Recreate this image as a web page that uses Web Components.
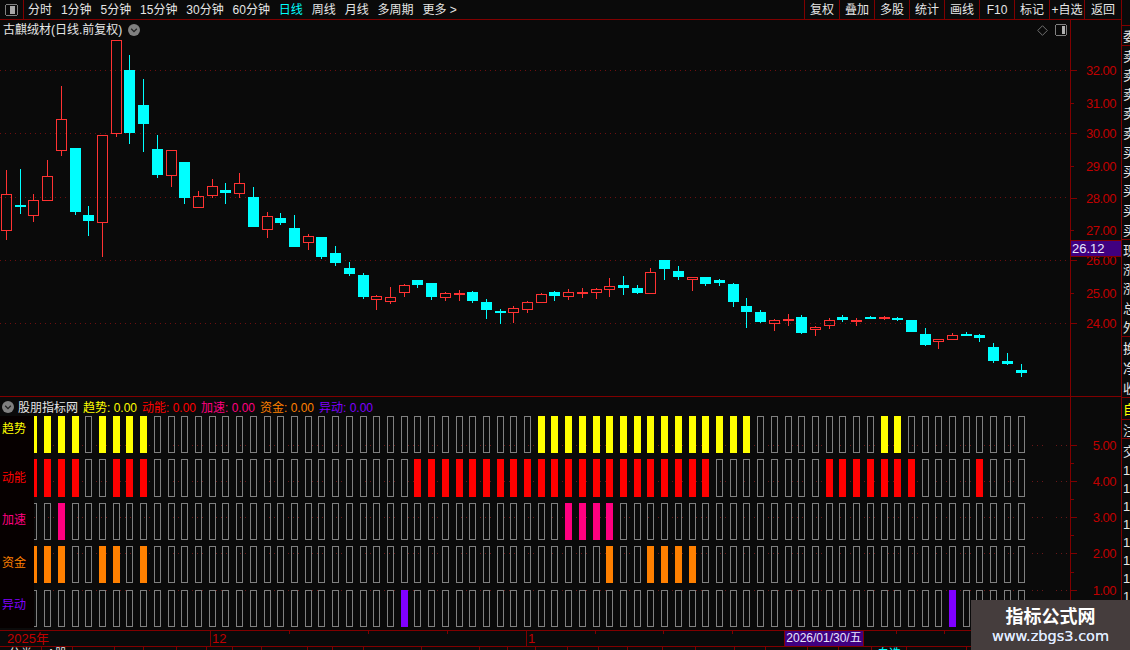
<!DOCTYPE html>
<html>
<head>
<meta charset="utf-8">
<style>
  html,body { margin:0; padding:0; background:#0a0a0a; overflow:hidden; }
  body { width:1130px; height:650px; font:12px "Liberation Sans","Noto Sans CJK SC",sans-serif; color:#e6e6e6; }
</style>
</head>
<body>
<kline-app>
  <k-toolbar slot="toolbar">
    <k-tab>分时</k-tab><k-tab>1分钟</k-tab><k-tab>5分钟</k-tab><k-tab>15分钟</k-tab><k-tab>30分钟</k-tab><k-tab>60分钟</k-tab>
    <k-tab active>日线</k-tab><k-tab>周线</k-tab><k-tab>月线</k-tab><k-tab>多周期</k-tab><k-tab>更多 &gt;</k-tab>
    <k-btn slot="right">复权</k-btn><k-btn slot="right">叠加</k-btn><k-btn slot="right">多股</k-btn><k-btn slot="right">统计</k-btn>
    <k-btn slot="right">画线</k-btn><k-btn slot="right">F10</k-btn><k-btn slot="right">标记</k-btn><k-btn slot="right">+自选</k-btn><k-btn slot="right" wide>返回</k-btn>
  </k-toolbar>
  <candle-chart slot="main">古麒绒材(日线.前复权)</candle-chart>
  <indicator-panel slot="ind">
    <ind-item color="#ffff00" label="趋势" value="0.00"></ind-item>
    <ind-item color="#ff0000" label="动能" value="0.00"></ind-item>
    <ind-item color="#ff0080" label="加速" value="0.00"></ind-item>
    <ind-item color="#ff8000" label="资金" value="0.00"></ind-item>
    <ind-item color="#8000ff" label="异动" value="0.00"></ind-item>
  </indicator-panel>
  <time-axis slot="time"></time-axis>
  <bottom-tabs slot="tabs"></bottom-tabs>
  <side-strip slot="side"></side-strip>
  <zb-mark slot="mark"></zb-mark>
</kline-app>

<script>
// shared helpers
const BG = "#0a0a0a", LINE = "#800000", AXIS_TXT = "#c00000";
const barLeft = i => Math.round(3.07 + 13.71 * i);
const dots = (w, y, color, dash) => `<line x1="0" x2="${w}" y1="${y + .5}" y2="${y + .5}" stroke="${color}" stroke-dasharray="${dash}"/>`;

// up = red hollow, dn = cyan filled : [type, high, low, top, bottom] in page pixels
const CANDLES = [
  ["u",170,240,194,231],["d",169,214,205,207],["u",194,222,200,216],["u",160,201,176,201],["u",86,156,119,151],
  ["d",148,215,148,212],["d",206,236,215,221],["u",135,257,135,223],["u",40,137,40,134],["d",55,144,70,133],
  ["d",79,152,105,124],["d",135,178,149,175],["u",150,187,150,176],["d",162,204,162,198],["u",191,208,196,208],
  ["u",179,198,186,196],["d",183,204,190,193],["u",173,198,183,194],["d",187,227,197,227],["u",212,238,216,230],
  ["d",213,225,218,223],["d",215,247,228,247],["u",234,250,236,243],["d",237,259,237,257],["d",246,266,253,263],
  ["d",262,276,268,274],["d",273,299,275,297],["u",295,310,296,300],["u",287,304,297,302],["u",284,297,285,293],
  ["d",280,288,280,285],["d",283,300,283,297],["u",292,301,293,298],["u",290,301,293,295],["d",291,303,292,301],
  ["d",299,319,302,310],["d",309,324,311,313],["u",306,323,308,313],["u",301,313,302,310],["u",293,303,294,303],
  ["d",291,301,292,296],["u",289,300,292,297],["u",288,298,292,293],["u",288,299,289,293],["u",278,297,286,290],
  ["d",276,295,285,288],["d",285,294,288,293],["u",268,294,272,294],["d",260,280,260,269],["d",266,280,271,277],
  ["u",277,291,277,280],["d",277,286,277,284],["d",279,286,280,283],["d",283,307,284,302],["d",298,328,306,312],
  ["d",310,323,312,322],["u",319,331,320,324],["u",314,326,319,320],["d",315,334,317,333],["u",326,336,327,330],
  ["u",318,329,320,326],["d",315,322,317,320],["u",318,326,320,322],["d",316,319,317,318],["u",316,320,317,319],
  ["d",317,321,318,320],["d",320,332,320,332],["d",328,346,334,345],["u",339,349,339,342],["u",333,340,335,340],
  ["d",332,336,334,336],["d",334,342,335,338],["d",343,363,347,361],["d",353,365,361,364],["d",364,377,370,373]
];

// value axis on the right of a pane, labels sit at their scale position
class PriceAxis extends HTMLElement {
  constructor(){
    super();
    this.attachShadow({mode:"open"});
  }
  connectedCallback(){
    const marks = JSON.parse(this.getAttribute("marks"));
    const minor = JSON.parse(this.getAttribute("minor") || "[]");
    let html = `<style>
      :host { display:block; position:relative; width:50px; height:100%; flex:none; font:13px "Liberation Sans",sans-serif; color:${AXIS_TXT}; }
      b { position:absolute; left:0; height:1px; background:${LINE}; width:6px; }
      b.m { width:3px; }
      span { position:absolute; right:5px; line-height:14px; letter-spacing:-.5px; }
      </style>`;
    for (const [y, t, short] of marks) {
      html += `<b class="${short ? "m" : ""}" style="top:${y}px"></b><span style="top:${y - 6}px">${t}</span>`;
    }
    for (const y of minor) html += `<b class="m" style="top:${y}px"></b>`;
    html += `<slot></slot>`;
    this.shadowRoot.innerHTML = html;
  }
}
customElements.define("price-axis", PriceAxis);

class PriceTag extends HTMLElement {
  constructor(){
    super();
    this.attachShadow({mode:"open"}).innerHTML = `<style>
      :host { position:absolute; left:0; right:0; height:15px; background:#400080; border:solid ${LINE}; border-width:1px 0;
        color:#e8e8ff; font:13px/15px "Liberation Sans",sans-serif; padding-left:1px; }
      </style><slot></slot>`;
  }
}
customElements.define("price-tag", PriceTag);

const tplToolbar = document.createElement("template");
tplToolbar.innerHTML = `
<style>
  :host { display:flex; height:19px; border-bottom:1px solid ${LINE}; }
  .ico { width:23px; border-right:1px solid ${LINE}; display:flex; align-items:center; justify-content:center; flex:none; }
  .tabs { flex:1; display:flex; align-items:center; gap:8.9px; padding-left:4px; }
  .btns { display:flex; }
</style>
<div class="ico"><svg width="13" height="12" shape-rendering="crispEdges"><rect x=".5" y=".5" width="12" height="11" rx="2" fill="none" stroke="#808080"/><rect x="5" y="2" width="5" height="8" fill="#a8a8a8"/></svg></div>
<div class="tabs"><slot></slot></div>
<div class="btns"><slot name="right"></slot></div>`;
class KToolbar extends HTMLElement {
  constructor(){
    super();
    this.attachShadow({mode:"open"}).appendChild(tplToolbar.content.cloneNode(true));
  }
}
customElements.define("k-toolbar", KToolbar);

class KTab extends HTMLElement {
  constructor(){
    super();
    this.attachShadow({mode:"open"}).innerHTML = `<style>
      :host { display:block; white-space:nowrap; color:#e6e6e6; height:19px; line-height:20px; }
      :host([active]) { color:#00ffff; }
      </style><slot></slot>`;
  }
}
customElements.define("k-tab", KTab);

class KBtn extends HTMLElement {
  constructor(){
    super();
    this.attachShadow({mode:"open"}).innerHTML = `<style>
      :host { display:block; width:34px; height:19px; line-height:20px; text-align:center; border-left:1px solid ${LINE}; white-space:nowrap; color:#e6e6e6; }
      :host([wide]) { width:36px; }
      </style><slot></slot>`;
  }
}
customElements.define("k-btn", KBtn);

const tplChart = document.createElement("template");
tplChart.innerHTML = `
<style>
  :host { display:flex; height:376px; }
  .plot { position:relative; width:1070px; height:376px; border-right:1px solid ${LINE}; flex:none; }
  svg.c { display:block; }
  .title { position:absolute; left:3px; top:3px; display:flex; align-items:center; gap:6px; color:#e6e6e6; line-height:14px; white-space:nowrap; }
  .tools { position:absolute; right:3px; top:4px; display:flex; align-items:center; gap:7px; }
  .tools svg { display:block; }
</style>
<div class="plot">
  <svg class="c" width="1070" height="376"></svg>
  <div class="title"><slot></slot>
    <svg width="12" height="12"><circle cx="6" cy="6" r="6" fill="#808080"/><path d="M3.2 4.8 6 7.6 8.8 4.8" fill="none" stroke="#222" stroke-width="1.3"/></svg>
  </div>
  <div class="tools">
    <svg width="11" height="11"><path d="M5.5.7 10.3 5.5 5.5 10.3.7 5.5Z" fill="none" stroke="#707070"/></svg>
    <svg width="12" height="12" shape-rendering="crispEdges"><rect x=".5" y=".5" width="11" height="11" rx="2" fill="none" stroke="#808080"/><rect x="7" y="2" width="3" height="8" fill="#b0b0b0"/></svg>
  </div>
</div>
<price-axis marks='[[50,"32.00"],[83,"31.00",1],[113,"30.00"],[146,"29.00",1],[178,"28.00"],[210,"27.00",1],[240,"26.00"],[273,"25.00",1],[303,"24.00"]]'>
  <price-tag style="top:220px">26.12</price-tag>
</price-axis>`;
class CandleChart extends HTMLElement {
  constructor(){
    super();
    this.attachShadow({mode:"open"}).appendChild(tplChart.content.cloneNode(true));
  }
  connectedCallback(){
    const off = 20;
    let s = "";
    for (const y of [70,133,197,260,323]) s += dots(1070, y - off, "#6e0f0f", "1 4");
    CANDLES.forEach((c, i) => {
      const [t, hi, lo, top, bot] = c;
      const w = barLeft(i) + 3, l = w - 5;
      if (t === "d") {
        s += `<rect x="${w}" y="${hi - off}" width="1" height="${lo - hi}" fill="#00ffff"/>`;
        s += `<rect x="${l}" y="${top - off}" width="11" height="${Math.max(bot - top, 2)}" fill="#00ffff"/>`;
      } else {
        if (top > hi) s += `<rect x="${w}" y="${hi - off}" width="1" height="${top - hi}" fill="#ff3232"/>`;
        if (lo > bot) s += `<rect x="${w}" y="${bot - off}" width="1" height="${lo - bot}" fill="#ff3232"/>`;
        s += `<rect x="${l + .5}" y="${top - off + .5}" width="10" height="${Math.max(bot - top - 1, 1)}" fill="none" stroke="#ff3232"/>`;
      }
    });
    const svg = this.shadowRoot.querySelector("svg.c");
    svg.setAttribute("shape-rendering", "crispEdges");
    svg.innerHTML = s;
  }
}
customElements.define("candle-chart", CandleChart);

class IndItem extends HTMLElement {
  constructor(){
    super();
    this.attachShadow({mode:"open"});
  }
  connectedCallback(){
    this.shadowRoot.innerHTML = `<style>:host { display:block; white-space:nowrap; color:${this.getAttribute("color")}; width:54px; }</style>${this.getAttribute("label")}: ${this.getAttribute("value")}`;
  }
}
customElements.define("ind-item", IndItem);

// rows of the indicator : filled bar indexes per row
const range = (a, b) => Array.from({length:b - a + 1}, (_, k) => a + k);
const IND_ROWS = [
  {name:"趋势", color:"#ffff00", y:416, h:37, ly:429, on:[2,3,4,5,7,8,9,10,...range(39,54),64,65]},
  {name:"动能", color:"#ff0000", y:459, h:38, ly:478, on:[2,3,4,5,8,9,10,...range(30,51),...range(60,66),71]},
  {name:"加速", color:"#ff0080", y:503, h:37, ly:520, on:[4,41,42,43,44]},
  {name:"资金", color:"#ff8000", y:546, h:37, ly:563, on:[2,3,4,7,8,10,44,47,48,49,50]},
  {name:"异动", color:"#8000ff", y:590, h:37, ly:605, on:[29,69]}
];

const tplInd = document.createElement("template");
tplInd.innerHTML = `
<style>
  :host { display:flex; height:233px; border-top:1px solid ${LINE}; }
  .plot { position:relative; width:1070px; border-right:1px solid ${LINE}; flex:none; }
  .head { height:19px; display:flex; align-items:center; padding-left:2px; white-space:nowrap; }
  .head svg { margin-right:4px; flex:none; }
  .head .nm { width:65px; color:#e6e6e6; }
  .items { display:flex; gap:5px; }
  svg.b { display:block; }
  .lab { position:absolute; left:0; top:19px; width:34px; height:212px; background:#060000; }
  .lab span { position:absolute; left:2px; line-height:14px; }
</style>
<div class="plot">
  <div class="head">
    <svg width="12" height="12"><circle cx="6" cy="6" r="6" fill="#808080"/><path d="M3.2 4.8 6 7.6 8.8 4.8" fill="none" stroke="#222" stroke-width="1.3"/></svg>
    <span class="nm">股朋指标网</span>
    <div class="items"><slot></slot></div>
  </div>
  <svg class="b" width="1070" height="214"></svg>
  <div class="lab"></div>
</div>
<price-axis marks='[[48,"5.00"],[84,"4.00"],[120,"3.00"],[156,"2.00"],[193,"1.00"]]' minor='[66,102,138,175]'></price-axis>`;
class IndicatorPanel extends HTMLElement {
  constructor(){
    super();
    this.attachShadow({mode:"open"}).appendChild(tplInd.content.cloneNode(true));
  }
  connectedCallback(){
    const off = 416;
    let s = "", lab = "";
    for (const y of [445,481,517,553,590]) s += dots(1070, y - off, "#6a1818", "1 4 1 4 1 13");
    for (const r of IND_ROWS) {
      for (let i = 2; i < 75; i++) {
        const x = barLeft(i), cx = Math.max(x, 34);
        if (r.on.includes(i)) s += `<rect x="${cx}" y="${r.y - off}" width="${x + 7 - cx}" height="${r.h}" fill="${r.color}"/>`;
        else if (x >= 34) s += `<rect x="${x + .5}" y="${r.y - off + .5}" width="6" height="${r.h - 1}" fill="none" stroke="#808080"/>`;
        else s += `<path d="M34 ${r.y - off + .5}H37M34 ${r.y - off + r.h - .5}H37M36.5 ${r.y - off}V${r.y - off + r.h}" fill="none" stroke="#808080"/>`;
      }
      lab += `<span style="top:${r.ly - 416 - 7}px;color:${r.color}">${r.name}</span>`;
    }
    const svg = this.shadowRoot.querySelector("svg.b");
    svg.setAttribute("shape-rendering", "crispEdges");
    svg.innerHTML = s;
    this.shadowRoot.querySelector(".lab").innerHTML = lab;
  }
}
customElements.define("indicator-panel", IndicatorPanel);

class TimeAxis extends HTMLElement {
  constructor(){
    super();
    this.attachShadow({mode:"open"});
  }
  connectedCallback(){
    let h = `<style>
      :host { display:block; position:relative; height:15px; border-top:1px solid ${LINE}; border-bottom:1px solid ${LINE}; color:${AXIS_TXT}; line-height:15px; font-size:13px; }
      i { position:absolute; top:0; width:1px; height:3px; background:${LINE}; }
      i.s { height:15px; }
      span { position:absolute; top:0; }
      .cur { left:785px; width:78px; height:15px; background:#400080; outline:1px solid ${LINE}; color:#e8e8ff; text-align:center; font-size:12px; white-space:nowrap; }
      </style>
      <span style="left:7px">2025年</span><span style="left:212px">12</span><span style="left:528px">1</span>
      <i class="s" style="left:210px"></i><i class="s" style="left:526px"></i>
      <span class="cur">2026/01/30/五</span>`;
    for (const x of [289,368,447,595,663,732,896,944]) h += `<i style="left:${x}px"></i>`;
    this.shadowRoot.innerHTML = h;
  }
}
customElements.define("time-axis", TimeAxis);

// only the top of this row is still inside the window
class BottomTabs extends HTMLElement {
  constructor(){
    super();
    this.attachShadow({mode:"open"});
  }
  connectedCallback(){
    const tabs = [[42,"分类"],[31,"A股"],[42],[29],[33],[30],[26],[29],[46],[25],[31],[58],[58],[28],[28],[32],[31],[29],[35],[33],[39],[31],[42],[31],[33,"",1],[35,"自选",2],[60]];
    let h = `<style>
      :host { display:flex; height:10px; overflow:hidden; line-height:15px; color:#e6e6e6; }
      div { border-right:1px solid ${LINE}; flex:none; box-sizing:border-box; text-align:center; height:10px; }
      .c { color:#00ffff; }
      </style>`;
    for (const [w, t, k] of tabs) h += `<div class="${k === 2 ? "c" : ""}" style="width:${w}px">${t || ""}</div>`;
    this.shadowRoot.innerHTML = h;
  }
}
customElements.define("bottom-tabs", BottomTabs);

class SideStrip extends HTMLElement {
  constructor(){
    super();
    this.attachShadow({mode:"open"});
  }
  connectedCallback(){
    const groups = [
      [[25,""]],
      [[19,"委"]],
      [[19,"卖"],[19,"卖"],[19,"卖"],[19,"卖"],[20,"卖"],[19,"买"],[19,"买"],[19,"买"],[20,"买"],[20,"买"]],
      [[19,"现"],[19,"涨"],[19,"涨"],[20,"总"],[19,"外"]],
      [[20,"换"],[20,"净"],[20,"收"]],
      [[21,"自",1]],
      [[18,"注"]],
      [[22,"交"],[18,"1"],[18,"1"],[18,"1"],[18,"1"],[18,"1"],[18,"1"],[18,"1"],[18,"1"]]
    ];
    let h = `<style>
      :host { display:block; width:8px; height:650px; overflow:hidden; border-left:1px solid ${LINE}; font-size:13px; color:#e6e6e6; }
      section { border-bottom:1px solid ${LINE}; }
      section:last-child { border-bottom:0; }
      p { margin:0; white-space:nowrap; overflow:hidden; display:flex; align-items:center; padding-left:1px; }
      .y { color:#ffff00; }
      </style>`;
    for (const g of groups) {
      h += "<section>";
      for (const [ht, t, y] of g) h += `<p class="${y ? "y" : ""}" style="height:${ht}px">${t}</p>`;
      h += "</section>";
    }
    this.shadowRoot.innerHTML = h;
  }
}
customElements.define("side-strip", SideStrip);

class ZbMark extends HTMLElement {
  constructor(){
    super();
    this.attachShadow({mode:"open"}).innerHTML = `<style>
      :host { position:absolute; right:0; bottom:0; width:159px; height:50px; background:#453d3d; display:flex; flex-direction:column; align-items:center; justify-content:center; color:#fff; }
      .a { font:700 18px/22px "Noto Sans CJK SC",sans-serif; }
      .b { font:14.5px/20px "DejaVu Sans",sans-serif; color:#e0ebff; white-space:nowrap; text-shadow:0 0 .6px #e0ebff; }
      </style><div class="a">指标公式网</div><div class="b">www.zbgs3.com</div>`;
  }
}
customElements.define("zb-mark", ZbMark);

const tplApp = document.createElement("template");
tplApp.innerHTML = `
<style>
  :host { display:grid; position:relative; width:1130px; height:650px; grid-template-columns:1121px 9px; overflow:hidden; background:${BG}; }
  .left { min-width:0; height:650px; overflow:hidden; }
</style>
<div class="left">
  <slot name="toolbar"></slot>
  <slot name="main"></slot>
  <slot name="ind"></slot>
  <slot name="time"></slot>
  <slot name="tabs"></slot>
</div>
<slot name="side"></slot>
<slot name="mark"></slot>`;
class KlineApp extends HTMLElement {
  constructor(){
    super();
    this.attachShadow({mode:"open"}).appendChild(tplApp.content.cloneNode(true));
  }
}
customElements.define("kline-app", KlineApp);
</script>
</body>
</html>
